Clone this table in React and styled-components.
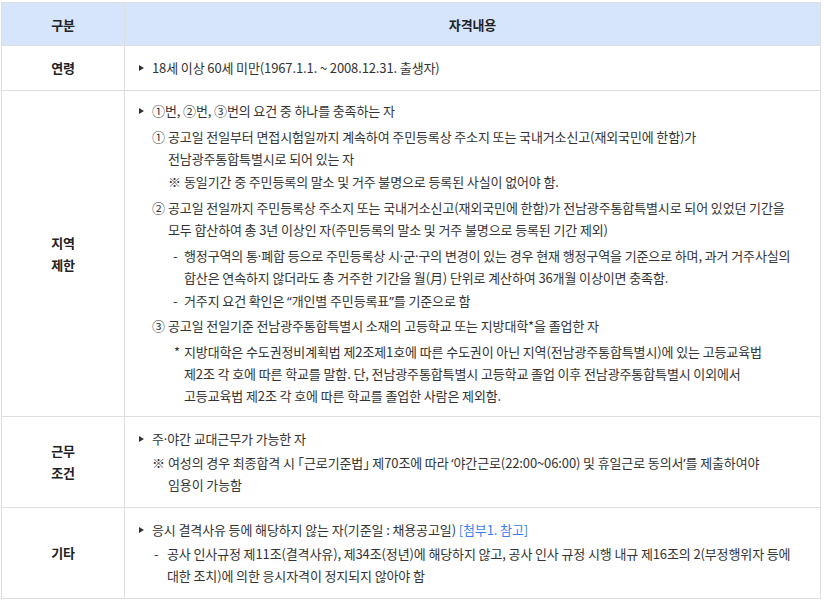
import React from "react";
import styled, { createGlobalStyle } from "styled-components";

const Global = createGlobalStyle`
  html, body { margin: 0; padding: 0; background: #ffffff; }
  body {
    font-family: "Noto Sans CJK KR", "Noto Sans", sans-serif;
    color: #333333;
    -webkit-font-smoothing: antialiased;
  }
`;

const Wrap = styled.div`
  padding: 2px 3px 0 1px;
`;

const Table = styled.table`
  width: 820px;
  border-collapse: collapse;
  table-layout: fixed;
  font-size: 13px;
  letter-spacing: -0.12px;
`;

const HeadCell = styled.th`
  background: #d6e5fc;
  border: 1px solid #dedede;
  height: 42px;
  padding: 0;
  font-weight: 700;
  font-size: 13px;
  color: #222222;
  text-align: center;
  vertical-align: middle;
`;

const LabelCell = styled.td`
  width: 122px;
  border: 1px solid #dedede;
  text-align: center;
  vertical-align: middle;
  font-weight: 700;
  color: #222222;
  line-height: 22px;
  padding: 0;
`;

const ContentCell = styled.td`
  border: 1px solid #dedede;
  padding: ${(p) => p.$pad || "11px"} 12px ${(p) => p.$pad || "11px"} 13px;
  vertical-align: middle;
  line-height: 22px;
  color: #333333;
`;

const Item = styled.div`
  display: flex;
  align-items: flex-start;
  margin-top: ${(p) => (p.$first ? 0 : p.$gap ?? 3)}px;
  margin-left: ${(p) => p.$indent || 0}px;
  white-space: nowrap;
`;

const Marker = styled.span`
  flex: 0 0 ${(p) => p.$w}px;
  width: ${(p) => p.$w}px;
  box-sizing: border-box;
  color: #333333;
`;

const Tri = styled.span`
  flex: 0 0 14px;
  height: 22px;
  position: relative;
  &::before {
    content: "";
    position: absolute;
    left: 1px;
    top: 8px;
    border-left: 5px solid #333333;
    border-top: 3px solid transparent;
    border-bottom: 3px solid transparent;
  }
`;

const Text = styled.span`
  flex: 1 1 auto;
`;

const Link = styled.span`
  color: #3d7ff0;
`;

const Latin = styled.span`
  font-family: "Noto Sans", "Liberation Sans", sans-serif;
`;

const Half = styled.span`
  font-feature-settings: "halt" 1;
`;

const Bullet = ({ children, first, gap }) => (
  <Item $first={first} $gap={gap}>
    <Tri />
    <Text>{children}</Text>
  </Item>
);

const Sub = ({ mark, w = 16, indent = 0, gap, children }) => (
  <Item $indent={indent} $gap={gap}>
    <Marker $w={w}>{mark}</Marker>
    <Text>{children}</Text>
  </Item>
);

const Dot = () => <Latin>·</Latin>;

export default function App() {
  return (
    <Wrap>
      <Global />
      <Table>
        <thead>
          <tr>
            <HeadCell style={{ width: 122 }}>구분</HeadCell>
            <HeadCell>자격내용</HeadCell>
          </tr>
        </thead>
        <tbody>
          <tr>
            <LabelCell>연령</LabelCell>
            <ContentCell>
              <Bullet first>18세 이상 60세 미만(1967.1.1. ~ 2008.12.31. 출생자)</Bullet>
            </ContentCell>
          </tr>
          <tr>
            <LabelCell>
              지역
              <br />
              제한
            </LabelCell>
            <ContentCell $pad="9px">
              <Bullet first>①번, ②번, ③번의 요건 중 하나를 충족하는 자</Bullet>
              <Sub mark="①" indent={14} gap={4}>
                공고일 전일부터 면접시험일까지 계속하여 주민등록상 주소지 또는 국내거소신고(재외국민에 한함)가
                <br />
                전남광주통합특별시로 되어 있는 자
              </Sub>
              <Sub mark="※" indent={30} w={16} gap={1}>
                동일기간 중 주민등록의 말소 및 거주 불명으로 등록된 사실이 없어야 함.
              </Sub>
              <Sub mark="②" indent={14} gap={4}>
                공고일 전일까지 주민등록상 주소지 또는 국내거소신고(재외국민에 한함)가 전남광주통합특별시로 되어 있었던 기간을
                <br />
                모두 합산하여 총 3년 이상인 자(주민등록의 말소 및 거주 불명으로 등록된 기간 제외)
              </Sub>
              <Sub mark="-" indent={35} w={11} gap={4}>
                행정구역의 통<Dot />폐합 등으로 주민등록상 시<Dot />군<Dot />구의 변경이 있는 경우 현재 행정구역을 기준으로 하며, 과거 거주사실의
                <br />
                합산은 연속하지 않더라도 총 거주한 기간을 월(月) 단위로 계산하여 36개월 이상이면 충족함.
              </Sub>
              <Sub mark="-" indent={35} w={11} gap={1}>
                거주지 요건 확인은 <Latin>“</Latin>개인별 주민등록표<Latin>”</Latin>를 기준으로 함
              </Sub>
              <Sub mark="③" indent={14} gap={3}>
                공고일 전일기준 전남광주통합특별시 소재의 고등학교 또는 지방대학*을 졸업한 자
              </Sub>
              <Sub mark="*" indent={36} w={10} gap={4}>
                지방대학은 수도권정비계획법 제2조제1호에 따른 수도권이 아닌 지역(전남광주통합특별시)에 있는 고등교육법
                <br />
                제2조 각 호에 따른 학교를 말함. 단, 전남광주통합특별시 고등학교 졸업 이후 전남광주통합특별시 이외에서
                <br />
                고등교육법 제2조 각 호에 따른 학교를 졸업한 사람은 제외함.
              </Sub>
            </ContentCell>
          </tr>
          <tr>
            <LabelCell>
              근무
              <br />
              조건
            </LabelCell>
            <ContentCell>
              <Bullet first>
                주<Dot />야간 교대근무가 가능한 자
              </Bullet>
              <Sub mark="※" indent={14} gap={2}>
                여성의 경우 최종합격 시 <Half>「</Half>근로기준법<Half>」</Half> 제70조에 따라{" "}
                <Latin>‘</Latin>야간근로(22:00~06:00) 및 휴일근로 동의서<Latin>’</Latin>를 제출하여야
                <br />
                임용이 가능함
              </Sub>
            </ContentCell>
          </tr>
          <tr>
            <LabelCell>기타</LabelCell>
            <ContentCell>
              <Bullet first>
                응시 결격사유 등에 해당하지 않는 자(기준일 : 채용공고일) <Link>[첨부1. 참고]</Link>
              </Bullet>
              <Sub mark="-" indent={16} w={13} gap={2}>
                공사 인사규정 제11조(결격사유), 제34조(정년)에 해당하지 않고, 공사 인사 규정 시행 내규 제16조의 2(부정행위자 등에
                <br />
                대한 조치)에 의한 응시자격이 정지되지 않아야 함
              </Sub>
            </ContentCell>
          </tr>
        </tbody>
      </Table>
    </Wrap>
  );
}
